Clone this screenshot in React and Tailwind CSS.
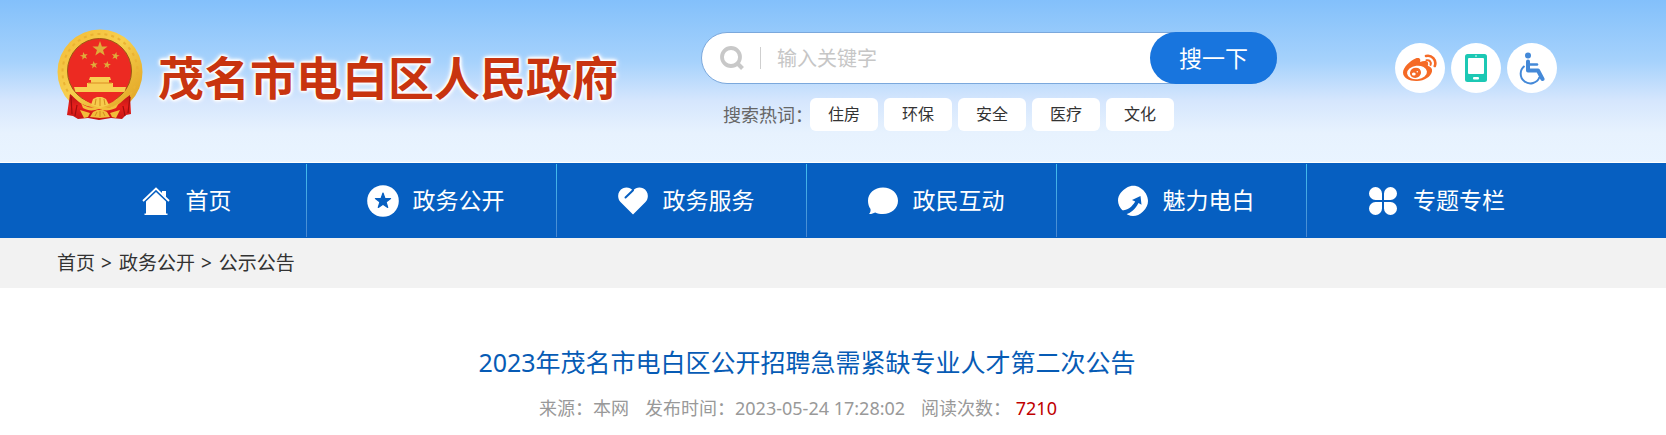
// ── Icons ──────────────────────────────────────────────────────────────────
const STAR = 'M0 -10 L2.4 -3.2 L9.5 -3.1 L3.8 1.2 L5.9 8.1 L0 4 L-5.9 8.1 L-3.8 1.2 L-9.5 -3.1 L-2.4 -3.2 Z';

function Emblem() {
  const stars = [[27, 27, 0.42, -12], [58.5, 27, 0.42, 12], [37, 36, 0.4, -8], [50, 36, 0.4, 8]];
  return (
    <svg viewBox="0 0 86 92" className="w-[86px] h-[92px] shrink-0" aria-hidden="true">
      <defs>
        <linearGradient id="gold" x1="0" y1="0" x2="1" y2="1">
          <stop offset="0" stopColor="#f3b935" />
          <stop offset="0.45" stopColor="#f7cf4d" />
          <stop offset="1" stopColor="#dd9d1c" />
        </linearGradient>
        <linearGradient id="drape" x1="0" y1="0" x2="0" y2="1">
          <stop offset="0" stopColor="#b81414" />
          <stop offset="0.5" stopColor="#e8201c" />
          <stop offset="1" stopColor="#c41313" />
        </linearGradient>
      </defs>
      <ellipse cx="43" cy="43" rx="42.5" ry="42.5" fill="url(#gold)" />
      <ellipse cx="43" cy="43" rx="37.5" ry="38" fill="none" stroke="#eab233" strokeWidth="2" strokeDasharray="3 4" />
      <ellipse cx="42.5" cy="42" rx="32" ry="32.5" fill="#ec2a22" stroke="#9a5a14" strokeWidth="1" />
      <g fill="#dfac3a">
        <path d={STAR} transform="translate(43 20) scale(.8)" />
        {stars.map(([x, y, s, r]) => (
          <path key={x} d={STAR} transform={`translate(${x} ${y}) rotate(${r}) scale(${s})`} />
        ))}
      </g>
      <path d="M33 48h20l1 3h-2v3h4v5H30v-5h4v-3h-2zM17 58h52l-1.5 5h-49z" fill="#f8cf53" />
      <path d="M31 54h24" stroke="#dc8d25" strokeWidth="1" />
      <path d="M22 65h41c-4 6-8 9-12 10l-8-6-8 6c-5-2-9-5-13-10z" fill="#ec2a22" />
      {/* ribbon below the wreath */}
      <path d="M13 65l-3 21 6 1 5 3 10-1 11 2 12-2 11 1 4-4 5-1-1-19c-9 6-11 11-18 12l-12 2-13-3c-7-2-11-7-17-12z" fill="url(#drape)" />
      <path d="M14 68l1 17M20 76l-2 11M73 68l-2 16M66 77l2 10" stroke="#9f0e0e" strokeWidth="1.2" />
      <path d="M24 74c6 5 12 6 18 2 7 4 13 3 20-2l-3 5c-6 3-12 3-17 1-6 2-11 2-16-1z" fill="#f2bf3c" />
      <path d="M34 76l2-6 4-2h5l4 2 3 6-9 3z" fill="#f7cb4c" />
      <path d="M38 76l1-6M43 77v-8M48 76l-1-6" stroke="#d28c1e" strokeWidth="1" />
      <path d="M33 88l3-5 4-2h6l4 2 3 5-10 1zM23 81l10 3-2 4-4 1zM63 81l-10 3 2 4 4 1z" fill="#f2bd3a" />
      <path d="M38 87l2-4M43 88v-6M48 87l-2-4" stroke="#d28c1e" strokeWidth="1" />
    </svg>
  );
}

const SearchGlyph = () => (
  <svg viewBox="0 0 24 24" className="size-6 shrink-0" fill="none" stroke="#c8c8c8" aria-hidden="true">
    <circle cx="11" cy="11" r="9" strokeWidth="3.800" />
    <path d="M17 17l5.500 5.500" strokeWidth="4" />
  </svg>
);

const WeiboIcon = () => (
  <svg viewBox="0 0 34 28" className="h-7 w-[34px]" aria-hidden="true">
    <path d="M12.500 4.500c2.500-1 4.500-.5 4.800 1.500l-.2 2c4-1.500 7.500-1.200 8 1 .2 1-.1 1.900-.3 2.800 3.200 1 4.700 3 4.200 5.700-.9 5-7.500 9.300-15 9.500C6.500 27.300 0 24 0 18.500 0 13.500 7.500 6.300 12.500 4.500z" fill="#f56a26" />
    <ellipse cx="14" cy="18.500" rx="10" ry="6.800" transform="rotate(-6 14 18.500)" fill="#fff" />
    <ellipse cx="12.500" cy="18.800" rx="5.600" ry="5" transform="rotate(-20 12.500 18.800)" fill="#f56a26" />
    <ellipse cx="10.800" cy="20" rx="1.900" ry="1.600" fill="#fff" />
    <circle cx="14.300" cy="17.800" r="0.800" fill="#fff" />
    <path d="M23 2c5.500-1.500 11 4 8.800 10" fill="none" stroke="#f56a26" strokeWidth="2.600" strokeLinecap="round" />
    <path d="M23.500 6.300c3-.5 5 1.500 4 4.600" fill="none" stroke="#f56a26" strokeWidth="2" strokeLinecap="round" />
  </svg>
);

const TabletIcon = () => (
  <svg viewBox="0 0 22 28" className="w-[22px] h-7" aria-hidden="true">
    <rect width="22" height="28" rx="2.500" fill="#1cc8b4" />
    <rect x="3" y="4" width="16" height="16" rx="1" fill="#fff" />
    <rect x="8" y="23" width="6" height="2.500" rx="1" fill="#fff" />
    <circle cx="11" cy="2" r="0.800" fill="#fff" />
  </svg>
);

const WheelchairIcon = () => (
  <svg viewBox="0 0 26 33" className="w-[26px] h-[33px]" aria-hidden="true">
    <circle cx="9" cy="3.500" r="3" fill="#4489d8" />
    <path d="M9 9.500v9h10l4.500 8.500" fill="none" stroke="#4489d8" strokeWidth="4" strokeLinecap="round" strokeLinejoin="round" />
    <path d="M10 12.500h8" stroke="#4489d8" strokeWidth="2.500" strokeLinecap="round" />
    <path d="M5.500 14A9.700 9.700 0 1 0 20.500 25" fill="none" stroke="#4489d8" strokeWidth="2" />
  </svg>
);

const HomeIcon = () => (
  <svg viewBox="0 0 28 28" className="size-7" aria-hidden="true">
    <path d="M1 14L14 1.500 27 14" fill="none" stroke="#fff" strokeWidth="1.800" />
    <path d="M20 4h4v6.500l-4-4z" fill="#fff" />
    <path d="M14 5L24 14.500V26.500h1.500V28h-23v-1.500H4V14.500z" fill="#fff" />
  </svg>
);

const StarIcon = () => (
  <svg viewBox="0 0 32 32" className="size-8" aria-hidden="true">
    <circle cx="16" cy="16" r="15.800" fill="#fff" />
    <path d={STAR} transform="translate(16 16) scale(.8)" fill="#065fc1" stroke="#065fc1" strokeWidth="1.500" strokeLinejoin="round" />
  </svg>
);

const HeartIcon = () => (
  <svg viewBox="0 0 32 32" className="size-8" aria-hidden="true">
    <path d="M16 29.500L3.500 17C-.5 12.500.8 5.500 6 3.200c3.600-1.500 7.300-.7 10 2.300 2.700-3 6.400-3.800 10-2.300 5.200 2.300 6.500 9.300 2.500 13.800z" fill="#fff" />
    <path d="M8.500 12.500L14 7.200l2-2" fill="none" stroke="#065fc1" strokeWidth="2" strokeLinecap="round" />
  </svg>
);

const ChatIcon = () => (
  <svg viewBox="0 0 32 32" className="size-8" aria-hidden="true">
    <path d="M16 2.500c8.500 0 15 5.700 15 13.300S24.500 29.100 16 29.100c-3 0-5.500-.6-7.800-1.600-2 1-4 1.700-6.200 1.500 1.300-1.300 1.800-3 1.500-5C1.900 21.700 1 19 1 15.800 1 8.200 7.500 2.500 16 2.500z" fill="#fff" />
  </svg>
);

const ArrowIcon = () => (
  <svg viewBox="0 0 32 32" className="size-8" aria-hidden="true">
    <path d="M10 2.500c4-2.200 9-2.200 13 .2C28 5.600 31 11 31 16c0 3.500-1.500 7-5 10.500-3 3-6.500 4.500-10 4.500s-7-1.500-10-5C2.800 22.500 1 19.500 1 15.500 1 10 5 5.300 10 2.500z" fill="#fff" />
    <path d="M4 25.500c6.500.2 11-3.500 14.200-8.900l-3.200-1.700L23.500 11l1 8.700-3-1.600C18.200 24.500 14 28 8.500 29.500z" fill="#065fc1" />
  </svg>
);

const CloverIcon = () => (
  <svg viewBox="0 0 32 32" className="size-8" fill="#fff" aria-hidden="true">
    <path d="M15 15H8.500A6.500 6.500 0 1 1 15 8.500zM17 15V8.500A6.500 6.500 0 1 1 23.500 15zM15 17v6.500A6.500 6.500 0 1 1 8.500 17zM17 17h6.500A6.500 6.500 0 1 1 17 23.500z" />
  </svg>
);

// ── Data ───────────────────────────────────────────────────────────────────
const NAV = [
  { label: '首页', Icon: HomeIcon },
  { label: '政务公开', Icon: StarIcon },
  { label: '政务服务', Icon: HeartIcon },
  { label: '政民互动', Icon: ChatIcon },
  { label: '魅力电白', Icon: ArrowIcon },
  { label: '专题专栏', Icon: CloverIcon },
];
const HOT_WORDS = ['住房', '环保', '安全', '医疗', '文化'];
const CRUMBS = ['首页', '政务公开', '公示公告'];
const TOOLS = [
  { label: '微博', Icon: WeiboIcon },
  { label: '移动端', Icon: TabletIcon },
  { label: '无障碍', Icon: WheelchairIcon },
];

// ── Layout ─────────────────────────────────────────────────────────────────
function Container({ className = '', children }) {
  return (
    <div className="pr-[52px]">
      <div className={`mx-auto max-w-[1500px] ${className}`}>{children}</div>
    </div>
  );
}

function SearchBox() {
  return (
    <form className="ml-auto w-[576px] pt-8" onSubmit={e => e.preventDefault()}>
      <div className="flex h-[52px] items-center rounded-full border border-[#7ba8dc] bg-white pl-[18px]">
        <SearchGlyph />
        <span className="ml-4 h-[22px] w-px bg-[#cfcfcf]" />
        <input type="text" aria-label="搜索" placeholder="输入关键字" className="ml-4 min-w-0 flex-1 pt-[2px] text-[20px] text-gray-700 outline-none placeholder:text-[#c6c6c6]" />
        <button type="submit" className="-mr-px h-[52px] w-[127px] rounded-full bg-[#1875de] text-[23px] text-white">搜一下</button>
      </div>
      <div className="mt-[14px] flex items-center gap-[6px] pl-[22px]">
        <span className="w-[81px] whitespace-nowrap text-[18px] leading-8 text-[#666]">搜索热词：</span>
        {HOT_WORDS.map(w => (
          <a key={w} href="#" className="w-[68px] rounded-md bg-white text-center text-[16px] leading-[33px] text-[#333]">{w}</a>
        ))}
      </div>
    </form>
  );
}

function Header() {
  return (
    <header className="border-b border-white bg-[linear-gradient(#83c0fb,#a6d2fc_38%,#d5e6fd_62%,#e7f2fe_82%,#e9f4ff)]">
      <Container className="flex h-[162px] items-start">
        <a href="#" className="flex items-center gap-[15px] pt-[29px]">
          <Emblem />
          <span className="whitespace-nowrap pt-1 text-[46px] font-bold leading-[88px] text-[#c8340f] [text-shadow:0_0_1px_#fff,0_0_2px_#fff,0_0_2px_#fff,0_0_3px_#fff,0_0_3px_#fff,0_0_4px_#fff,0_0_4px_#fff,0_0_6px_#fff]">茂名市电白区人民政府</span>
        </a>
        <SearchBox />
        <div className="ml-[118px] flex gap-[6px] pt-[43px]">
          {TOOLS.map(({ label, Icon }) => (
            <a key={label} href="#" aria-label={label} className="grid size-[50px] place-items-center rounded-full bg-white"><Icon /></a>
          ))}
        </div>
      </Container>
    </header>
  );
}

function Nav() {
  return (
    <nav className="bg-[#065fc1]">
      <Container>
        <ul className="grid grid-cols-6">
          {NAV.map(({ label, Icon }, i) => (
            <li key={label} className="flex h-[75px] items-center">
              <a href="#" className="flex flex-1 items-center justify-center gap-[14px] pl-2 text-[23px] text-white">
                <span className="grid w-8 place-items-center"><Icon /></span>
                {label}
              </a>
              {i < NAV.length - 1 && <span className="h-[73px] w-px bg-linear-to-b from-[#3fc0f0] to-[#4a86d0]" />}
            </li>
          ))}
        </ul>
      </Container>
    </nav>
  );
}

function Breadcrumb() {
  return (
    <div className="bg-[#f2f2f2]">
      <Container className="flex gap-[6px] text-[19px] leading-[50px] text-[#333]">
        {CRUMBS.map((c, i) => (
          <span key={c} className="flex gap-[7px]">
            {i > 0 && <span>&gt;</span>}
            <a href="#">{c}</a>
          </span>
        ))}
      </Container>
    </div>
  );
}

function Article() {
  return (
    <main>
      <Container className="pt-[54px] text-center">
        <h1 className="text-[25px] leading-10 text-[#065bb5]">2023年茂名市电白区公开招聘急需紧缺专业人才第二次公告</h1>
        <p className="mt-[10px] flex justify-center gap-4 pr-[18px] text-[18px] leading-8 text-[#999]">
          <span>来源：本网</span>
          <span>发布时间：2023-05-24 17:28:02</span>
          <span>阅读次数： <span className="text-[#c00000]">7210</span></span>
        </p>
      </Container>
    </main>
  );
}

export default function App() {
  return (
    <div className="bg-white font-['Noto_Sans','Noto_Sans_CJK_SC',sans-serif]">
      <Header />
      <Nav />
      <Breadcrumb />
      <Article />
    </div>
  );
}
